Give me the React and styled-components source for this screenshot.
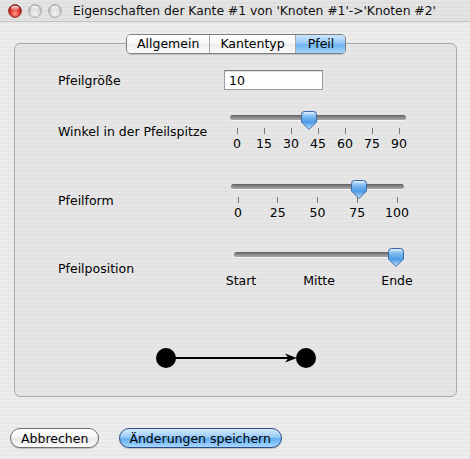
import styled, { createGlobalStyle } from "styled-components";

const GlobalStyle = createGlobalStyle`
  html, body {
    margin: 0;
    padding: 0;
    background: #ececec;
  }
  body {
    font-family: "DejaVu Sans", "Liberation Sans", sans-serif;
    font-size: 12.5px;
    color: #000;
  }
`;

const pinstripe = (a, b) =>
  `repeating-linear-gradient(to bottom, ${a} 0px, ${a} 2px, ${b} 2px, ${b} 4px)`;

const sliders = [
  {
    label: "Winkel in der Pfeilspitze",
    inset: 6,
    width: 176,
    value: 40,
    min: 0,
    max: 90,
    ticks: ["0", "15", "30", "45", "60", "75", "90"],
    marks: true,
    height: 62,
  },
  {
    label: "Pfeilform",
    inset: 7,
    width: 173,
    value: 76.5,
    min: 0,
    max: 100,
    ticks: ["0", "25", "50", "75", "100"],
    marks: true,
    height: 76,
  },
  {
    label: "Pfeilposition",
    inset: 10,
    width: 170,
    value: 100,
    min: 0,
    max: 100,
    ticks: ["Start", "Mitte", "Ende"],
    marks: false,
    height: 60,
  },
];

function Light({ color }) {
  const red = color === "red";
  return (
    <svg width="14" height="14" viewBox="0 0 14 14">
      <defs>
        <radialGradient id={`l-${color}`} cx="50%" cy="70%" r="65%">
          <stop offset="0%" stopColor={red ? "#ff9a8e" : "#f6f6f6"} />
          <stop offset="55%" stopColor={red ? "#e0392e" : "#d9d9d9"} />
          <stop offset="100%" stopColor={red ? "#a3140f" : "#b5b5b5"} />
        </radialGradient>
        <linearGradient id={`h-${color}`} x1="0" y1="0" x2="0" y2="1">
          <stop offset="0%" stopColor="#fff" stopOpacity="0.9" />
          <stop offset="100%" stopColor="#fff" stopOpacity="0.1" />
        </linearGradient>
      </defs>
      <circle cx="7" cy="7" r="6.4" fill={`url(#l-${color})`} stroke={red ? "#7d1f1a" : "#9b9b9b"} strokeWidth="0.8" />
      <ellipse cx="7" cy="4.2" rx="4" ry="2.4" fill={`url(#h-${color})`} />
    </svg>
  );
}

function Thumb() {
  return (
    <svg width="16" height="19" viewBox="0 0 16 19">
      <defs>
        <linearGradient id="thumb" x1="0" y1="0" x2="0" y2="1">
          <stop offset="0%" stopColor="#cfe6fb" />
          <stop offset="30%" stopColor="#7ab8ef" />
          <stop offset="60%" stopColor="#4d9be6" />
          <stop offset="100%" stopColor="#c4e4ff" />
        </linearGradient>
      </defs>
      <path
        d="M3.5 0.5 H12.5 Q15.5 0.5 15.5 3.5 V11 L8 18.5 L0.5 11 V3.5 Q0.5 0.5 3.5 0.5 Z"
        fill="url(#thumb)"
        stroke="#3a67a6"
        strokeWidth="1"
      />
      <path d="M3 2 H13" stroke="#eaf5ff" strokeWidth="1" opacity="0.8" />
    </svg>
  );
}

function Slider({ inset, width, value, min, max, ticks, marks }) {
  const left = ((value - min) / (max - min)) * (width - 16);
  return (
    <SliderBox $inset={inset} $width={width}>
      <Track />
      <ThumbHolder style={{ left }}>
        <Thumb />
      </ThumbHolder>
      <TickRow>
        {ticks.map((t) => (
          <Tick key={t}>
            <TickMark $visible={marks} />
            <TickLabel>{t}</TickLabel>
          </Tick>
        ))}
      </TickRow>
    </SliderBox>
  );
}

function App() {
  return (
    <>
      <GlobalStyle />
      <Window>
        <TitleBar>
          <Lights>
            <Light color="red" />
            <Light color="gray" />
            <Light color="gray2" />
          </Lights>
          <Title>Eigenschaften der Kante #1 von 'Knoten #1'-&gt;'Knoten #2'</Title>
        </TitleBar>
        <Body>
          <Tabs>
            <Tab>Allgemein</Tab>
            <Tab>Kantentyp</Tab>
            <Tab $active>Pfeil</Tab>
          </Tabs>
          <GroupBox>
            <Row $height={40}>
              <Label>Pfeilgröße</Label>
              <Input>10</Input>
            </Row>
            {sliders.map((s) => (
              <Row key={s.label} $height={s.height}>
                <Label>{s.label}</Label>
                <Slider {...s} />
              </Row>
            ))}
            <Diagram>
              <svg width="164" height="24" viewBox="153 346 164 24">
                <line x1="172" y1="358" x2="292" y2="358" stroke="#000" strokeWidth="2" />
                <path d="M284 353.5 L296 358 L284 362.5 L287.5 358 Z" fill="#000" />
                <circle cx="165" cy="358" r="10" fill="#000" />
                <circle cx="305" cy="358" r="10" fill="#000" />
              </svg>
            </Diagram>
          </GroupBox>
          <Buttons>
            <Button>Abbrechen</Button>
            <Button $primary>Änderungen speichern</Button>
          </Buttons>
        </Body>
      </Window>
    </>
  );
}

const Window = styled.div`
  width: 470px;
  height: 459px;
  overflow: hidden;
  display: flex;
  flex-direction: column;
  background: ${pinstripe("#ededed", "#e8e8e8")};
`;

const TitleBar = styled.div`
  height: 21px;
  display: flex;
  align-items: center;
  border-bottom: 1px solid #c4c4c4;
  background: ${pinstripe("#e4e4e4", "#dedede")};
`;

const Lights = styled.div`
  display: flex;
  gap: 6px;
  padding-left: 8px;
  width: 65px;

  svg {
    display: block;
  }
`;

const Title = styled.div`
  font-size: 12.4px;
  color: #111;
  white-space: nowrap;
  letter-spacing: -0.05px;
`;

const Body = styled.div`
  flex: 1;
  display: flex;
  flex-direction: column;
  padding-top: 12px;
`;

const Tabs = styled.div`
  position: relative;
  z-index: 1;
  align-self: flex-start;
  margin-left: 126px;
  display: flex;
  height: 20px;
  border: 1px solid #7f7f7f;
  border-radius: 5px;
  overflow: hidden;
  box-sizing: border-box;
  box-shadow: 0 1px 1px rgba(0, 0, 0, 0.15);
`;

const Tab = styled.div`
  display: flex;
  align-items: center;
  padding: 0 ${(p) => (p.$active ? "11px 0 12px" : "10px")};
  border-left: 1px solid #a8a8a8;
  line-height: 18px;
  background: ${(p) =>
    p.$active
      ? "linear-gradient(to bottom, #cde6fc 0%, #95c9f6 45%, #6eb3f1 55%, #a6d6fb 100%)"
      : "linear-gradient(to bottom, #ffffff 0%, #f7f7f7 45%, #ececec 55%, #fafafa 100%)"};

  &:first-child {
    border-left: none;
  }
`;

const GroupBox = styled.div`
  margin: -11px 13px 0 14px;
  height: 354px;
  box-sizing: border-box;
  border: 1px solid #ababab;
  border-radius: 6px;
  background: ${pinstripe("#e6e6e6", "#e2e2e2")};
  padding: 16px 0 0 43px;
  display: flex;
  flex-direction: column;
`;

const Row = styled.div`
  height: ${(p) => p.$height}px;
  display: flex;
  align-items: center;
`;

const Label = styled.div`
  width: 166px;
  flex: none;
  white-space: nowrap;
`;

const Input = styled.div`
  width: 99px;
  height: 20px;
  box-sizing: border-box;
  border: 1px solid #9c9c9c;
  border-top-color: #7e7e7e;
  background: #fff;
  box-shadow: inset 0 1px 1px rgba(0, 0, 0, 0.15);
  padding: 2px 0 0 4px;
  line-height: 15px;
`;

const SliderBox = styled.div`
  position: relative;
  margin-left: ${(p) => p.$inset}px;
  width: ${(p) => p.$width}px;
  padding-top: 4px;
  height: 40px;
  box-sizing: border-box;
`;

const Track = styled.div`
  height: 5px;
  border-radius: 3px;
  background: linear-gradient(to bottom, #5f5f5f 0%, #8a8a8a 50%, #a9a9a9 100%);
  box-shadow: 0 1px 0 rgba(255, 255, 255, 0.6);
`;

const ThumbHolder = styled.div`
  position: absolute;
  top: 0;

  svg {
    display: block;
  }
`;

const TickRow = styled.div`
  display: flex;
  justify-content: space-between;
  padding: 8px 7px 0 7px;
`;

const Tick = styled.div`
  width: 0;
  display: flex;
  flex-direction: column;
  align-items: center;
`;

const TickMark = styled.div`
  width: 1px;
  height: 6px;
  background: ${(p) => (p.$visible ? "#7a7a7a" : "transparent")};
`;

const TickLabel = styled.div`
  margin-top: 2px;
  line-height: 15px;
  white-space: nowrap;
`;

const Diagram = styled.div`
  display: flex;
  justify-content: center;
  margin: 48px 0 0 -43px;

  svg {
    display: block;
  }
`;

const Buttons = styled.div`
  display: flex;
  gap: 20px;
  padding: 31px 0 0 10px;
`;

const Button = styled.div`
  height: 20px;
  box-sizing: border-box;
  display: flex;
  align-items: center;
  border-radius: 10px;
  padding: ${(p) => (p.$primary ? "0 10px 0 9px" : "0 10px")};
  border: 1px solid ${(p) => (p.$primary ? "#2d4c8a" : "#6f6f6f")};
  background: ${(p) =>
    p.$primary
      ? "linear-gradient(to bottom, #d3eafd 0%, #97cbf7 45%, #64aef0 55%, #a6d7fd 100%)"
      : "linear-gradient(to bottom, #ffffff 0%, #f5f5f5 45%, #e8e8e8 55%, #fdfdfd 100%)"};
  box-shadow: 0 1px 1px rgba(0, 0, 0, 0.2);
  white-space: nowrap;
`;

export default App;
